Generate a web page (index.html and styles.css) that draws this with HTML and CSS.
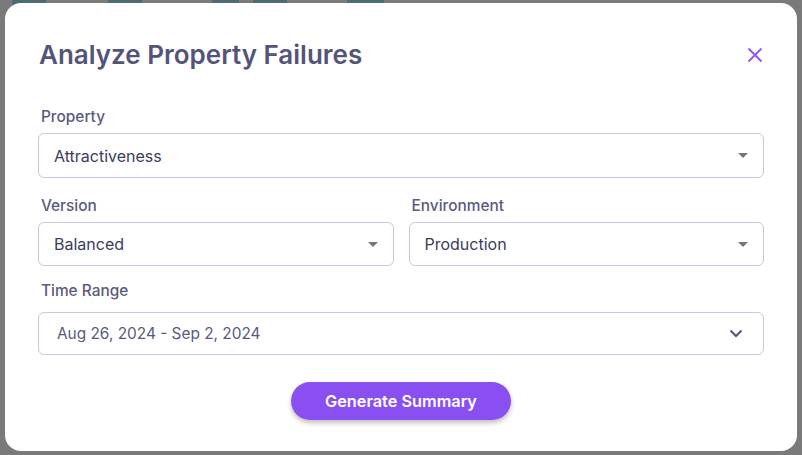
FILE: index.html
```html
<!DOCTYPE html>
<html lang="en">
<head>
    <meta charset="UTF-8">
    <meta name="viewport" content="width=device-width, initial-scale=1.0">
    <title>Analyze Property Failures</title>
    <link rel="stylesheet" href="styles.css">
</head>
<body>
    <!-- dimmed page behind the dialog -->
    <div class="backdrop">
        <div class="tabs">
            <span class="tab t1"></span>
            <span class="tab t2"></span>
            <span class="tab t3"></span>
            <span class="tab t4"></span>
            <span class="tab t5"></span>
        </div>
    </div>

    <div class="modal">
        <div class="modal-header">
            <h1 class="modal-title">Analyze Property Failures</h1>
            <button class="close-btn" aria-label="Close">
                <svg width="16" height="16" viewBox="0 0 16 16">
                    <path d="M1.5 1.5 L14.5 14.5 M14.5 1.5 L1.5 14.5" stroke="#8b5cf6" stroke-width="2" fill="none"/>
                </svg>
            </button>
        </div>

        <div class="field field-property">
            <label class="field-label">Property</label>
            <div class="select">
                <span class="select-value">Attractiveness</span>
                <span class="caret"></span>
            </div>
        </div>

        <div class="field-row">
            <div class="field">
                <label class="field-label">Version</label>
                <div class="select">
                    <span class="select-value">Balanced</span>
                    <span class="caret"></span>
                </div>
            </div>
            <div class="field">
                <label class="field-label">Environment</label>
                <div class="select">
                    <span class="select-value">Production</span>
                    <span class="caret"></span>
                </div>
            </div>
        </div>

        <div class="field field-time">
            <label class="field-label">Time Range</label>
            <div class="select date-select">
                <span class="select-value">Aug 26, 2024 - Sep 2, 2024</span>
                <svg class="chevron" width="14" height="9" viewBox="0 0 14 9">
                    <path d="M1.5 1.5 L7 7 L12.5 1.5" stroke="#55557a" stroke-width="2" fill="none"/>
                </svg>
            </div>
        </div>

        <div class="actions">
            <button class="primary-btn">Generate Summary</button>
        </div>
    </div>
</body>
</html>
```

FILE: styles.css
```css
body {
    margin: 0;
    font-family: Inter, "Noto Sans", sans-serif;
    background-color: #7a7a7a;
    height: 455px;
    overflow: hidden;
}
.backdrop {
    height: 455px;
}
.tabs {
    display: flex;
    height: 12px;
}
.tab {
    background: #4d6b78;
    height: 12px;
}
.t1 { margin-left: 12px; width: 34px; }
.t2 { margin-left: 62px; width: 34px; }
.t3 { margin-left: 70px; width: 27px; }
.t4 { margin-left: 14px; width: 34px; }
.t5 { margin-left: 60px; width: 37px; }

.modal {
    position: absolute;
    left: 5px;
    top: 3px;
    width: 792px;
    height: 448px;
    box-sizing: border-box;
    background: #fff;
    border-radius: 16px;
    padding: 35px 33px 0 33px;
}
.modal-header {
    display: flex;
    justify-content: space-between;
    align-items: center;
}
.modal-title {
    margin: 0;
    font-size: 26px;
    line-height: 34px;
    font-weight: 600;
    color: #54547a;
    padding-left: 1px;
}
.close-btn {
    background: none;
    border: none;
    padding: 0;
    margin-right: 1px;
    width: 16px;
    height: 16px;
    cursor: pointer;
}
.close-btn svg {
    display: block;
}
.field-property {
    margin-top: 35px;
}
.field-label {
    display: block;
    font-size: 15.4px;
    line-height: 20px;
    font-weight: 500;
    color: #5b5b7d;
    padding-left: 3px;
    margin-bottom: 6px;
}
.select {
    display: flex;
    align-items: center;
    justify-content: space-between;
    height: 45px;
    box-sizing: border-box;
    border: 1px solid #cbc6e2;
    border-radius: 6px;
    padding: 0 15px 0 15px;
}
.select-value {
    font-size: 16px;
    line-height: 20px;
    color: #3c3c5a;
}
.caret {
    width: 0;
    height: 0;
    border-left: 5px solid transparent;
    border-right: 5px solid transparent;
    border-top: 5px solid #767676;
}
.field-row {
    display: grid;
    grid-template-columns: 1fr 1fr;
    gap: 15px;
    margin-top: 18px;
}
.field-row .select {
    height: 44px;
}
.field-time {
    margin-top: 15px;
}
.field-time .field-label {
    margin-bottom: 11px;
}
.date-select {
    height: 43px;
    padding: 0 20px 0 18px;
}
.date-select .select-value {
    font-size: 15.4px;
    color: #5a5a7c;
}
.chevron {
    display: block;
}
.actions {
    display: flex;
    justify-content: center;
    margin-top: 27px;
}
.primary-btn {
    width: 220px;
    height: 38px;
    border: none;
    border-radius: 19px;
    background-color: #8a4ff0;
    color: #fff;
    font-family: Inter, "Noto Sans", sans-serif;
    font-size: 16.3px;
    font-weight: 600;
    box-shadow: 0 3px 5px rgba(0, 0, 0, 0.25);
    cursor: pointer;
}
```
